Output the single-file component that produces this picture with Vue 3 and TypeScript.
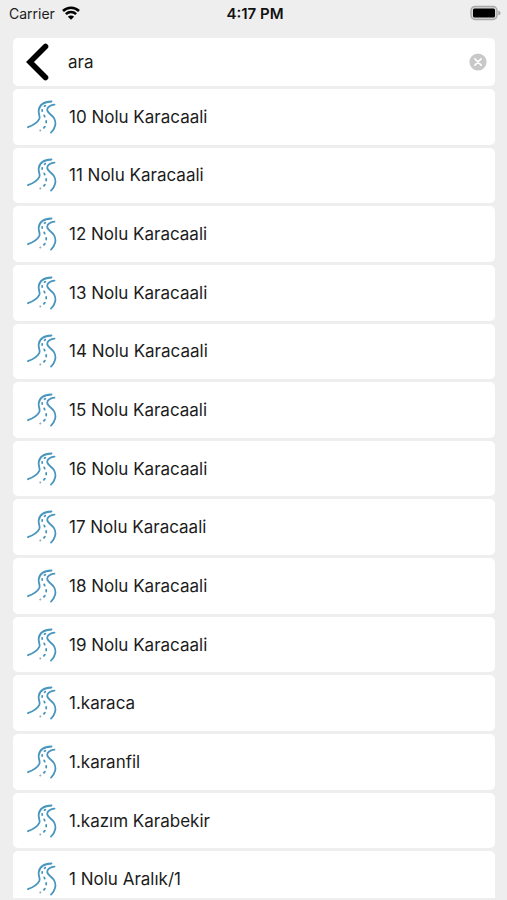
<script setup lang="ts">
import { ref } from 'vue'

const query = ref('ara')
const streets: string[] = [
  '10 Nolu Karacaali',
  '11 Nolu Karacaali',
  '12 Nolu Karacaali',
  '13 Nolu Karacaali',
  '14 Nolu Karacaali',
  '15 Nolu Karacaali',
  '16 Nolu Karacaali',
  '17 Nolu Karacaali',
  '18 Nolu Karacaali',
  '19 Nolu Karacaali',
  '1.karaca',
  '1.karanfil',
  '1.kazım Karabekir',
  '1 Nolu Aralık/1',
]
</script>

<template>
  <div class="screen">
    <header class="status">
      <div class="carrier">
        <span>Carrier</span>
        <svg class="wifi" viewBox="0 0 18 14" aria-hidden="true">
          <path d="M1 5a11.5 11.5 0 0 1 16 0M3.900 8.100a7.400 7.400 0 0 1 10.200 0" fill="none" stroke="#000" stroke-width="2.600" />
          <path d="M9 13.800 5.900 10.700a4.400 4.400 0 0 1 6.200 0z" fill="#000" />
        </svg>
      </div>
      <span class="time">4:17 PM</span>
      <svg class="battery" viewBox="0 0 32 16" aria-hidden="true">
        <rect x="2" y="1.500" width="26" height="13" rx="4" fill="#d8d8d8" stroke="#a8a8a8" stroke-width="1.4" />
        <rect x="4" y="3.500" width="22" height="9" rx="1.500" fill="#000" />
        <path d="M29.300 5.700c1.600.4 2.200 1.200 2.200 2.300s-.6 1.900-2.200 2.300z" fill="#a5a5a5" />
      </svg>
    </header>

    <form class="search" role="search" @submit.prevent>
      <button class="back" type="button" aria-label="Geri">
        <svg viewBox="0 0 24 38" aria-hidden="true">
          <path d="M19.500 3.500 4 19l15.500 15.500" fill="none" stroke="#000" stroke-width="5.600" stroke-linecap="round" />
        </svg>
      </button>
      <input v-model="query" class="field" type="text" aria-label="Ara" />
      <button class="clear" type="button" aria-label="Temizle" @click="query = ''">
        <svg viewBox="0 0 18 18" aria-hidden="true">
          <circle cx="9" cy="9" r="8.600" fill="#c8c8c8" />
          <path d="m5.900 5.900 6.200 6.200m0-6.200-6.200 6.200" stroke="#fff" stroke-width="1.700" stroke-linecap="round" />
        </svg>
      </button>
    </form>

    <main class="results">
      <ul class="list">
        <li v-for="street in streets" :key="street" class="item">
          <a class="row" href="#">
            <svg class="road" viewBox="0 0 30 34" aria-hidden="true">
              <g fill="none" stroke="#4896be" stroke-width="1.800" stroke-linecap="round">
                <path d="M1 27.200c4.500-1.700 9.500-4.600 11.200-8 1.400-3-.9-5-.5-8.700C12.300 5 17 1.800 24.500 1.500" />
                <path d="M27.500 4.700c-3.800.3-7.200 2.400-7.300 5-.1 3.200 4.500 4.600 6.800 8.400 2.900 4.900 1 10.800-3 14.500" />
                <path d="m18.300 5.600-.8.600M15.200 9.800v1.200M17.200 15.400l.5 1.200M19.200 20.800v1.800M17.900 26.600l-1 1.200" />
              </g>
              <circle cx="13.300" cy="30.500" r="1" fill="#9aa8b0" />
            </svg>
            <span>{{ street }}</span>
          </a>
        </li>
      </ul>
    </main>
  </div>
</template>

<style>
body {
  margin: 0;
  background: #eee;
}
</style>

<style scoped>
.screen {
  box-sizing: border-box;
  height: 100vh;
  padding: 0 12px 2px 13px;
  display: flex;
  flex-direction: column;
  overflow: hidden;
  background: #eee;
  color: #1c1c1c;
  font-family: Inter, "Liberation Sans", sans-serif;
  font-size: 17px;
}

.status {
  flex: none;
  height: 26px;
  margin: 0 -6px 12px -4px;
  display: grid;
  grid-template-columns: 1fr auto 1fr;
  align-items: center;
  font-size: 14px;
}

.carrier {
  display: flex;
  align-items: center;
  gap: 7px;
}

.wifi {
  width: 18px;
  height: 14px;
}

.time {
  color: #111;
  font-size: 15px;
  font-weight: 600;
}

.battery {
  width: 32px;
  height: 16px;
  justify-self: end;
}

.search {
  flex: none;
  height: 48px;
  margin-bottom: 3px;
  padding: 0 8px 0 13px;
  box-sizing: border-box;
  display: flex;
  align-items: center;
  border-radius: 5px;
  background: #fff;
}

.back,
.clear {
  flex: none;
  display: flex;
  padding: 0;
  border: 0;
  background: none;
}

.back svg {
  width: 24px;
  height: 38px;
}

.clear svg {
  width: 18px;
  height: 18px;
}

.field {
  flex: 1;
  min-width: 0;
  margin: 0 8px 0 18px;
  padding: 0;
  border: 0;
  outline: 0;
  background: none;
  color: inherit;
  font: inherit;
}

.results {
  flex: 1;
  min-height: 0;
  overflow: hidden;
}

.list {
  min-height: 818px;
  margin: 0;
  padding: 0;
  display: grid;
  grid-auto-rows: 1fr;
  gap: 3px;
  list-style: none;
}

.item {
  display: grid;
  border-radius: 5px;
  background: #fff;
}

.row {
  padding: 0 14px;
  display: flex;
  align-items: center;
  gap: 12px;
  color: inherit;
  text-decoration: none;
}

.road {
  flex: none;
  width: 30px;
  height: 34px;
}
</style>
